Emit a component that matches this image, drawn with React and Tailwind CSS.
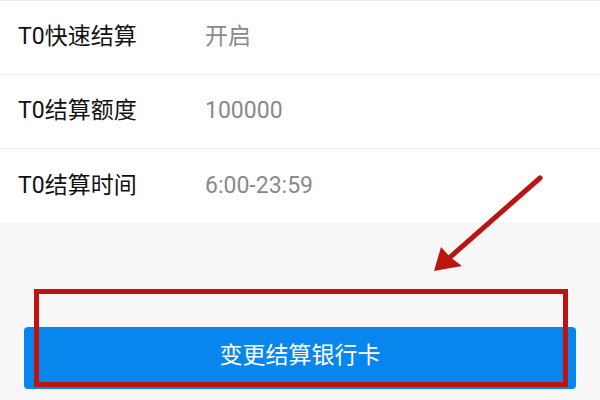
import React from 'react';

const rows = [
  { label: 'T0快速结算', value: '开启' },
  { label: 'T0结算额度', value: '100000' },
  { label: 'T0结算时间', value: '6:00-23:59' },
];

// 标注层：红色箭头
function Arrow() {
  return (
    <svg className="absolute inset-0 pointer-events-none" width="600" height="400" viewBox="0 0 600 400">
      <line x1="540" y1="178" x2="448" y2="259" stroke="#bb1512" strokeWidth="5" strokeLinecap="round" />
      <polygon points="434,271 441,247 450,257 462,266" fill="#bb1512" />
    </svg>
  );
}

export default function App() {
  return (
    <div
      className="relative w-[600px] h-[400px] overflow-hidden bg-[#f7f7f7]"
      style={{ fontFamily: 'Roboto, "Noto Sans CJK SC", sans-serif' }}
    >
      <div className="bg-white border-t border-[#efefef]">
        {rows.map((row, i) => (
          <div
            key={row.label}
            className={`flex items-center h-[74px] ${i < rows.length - 1 ? 'border-b border-[#efefef]' : ''}`}
          >
            <span className="w-[205px] pl-[18px] text-[23px] text-[#111111]">{row.label}</span>
            <span className="text-[23px] text-[#8a8a8a]">{row.value}</span>
          </div>
        ))}
      </div>

      <div className="px-[24px] pt-[104px]">
        <button className="w-full h-[62px] pb-[3px] rounded-[4px] bg-[#0886ee] text-white text-[23px] flex items-center justify-center">
          变更结算银行卡
        </button>
      </div>

      {/* 标注层：红框 */}
      <div className="absolute left-[34px] top-[289px] w-[534px] h-[98px] border-[5px] border-[#bb1512] pointer-events-none" />
      <Arrow />
    </div>
  );
}
